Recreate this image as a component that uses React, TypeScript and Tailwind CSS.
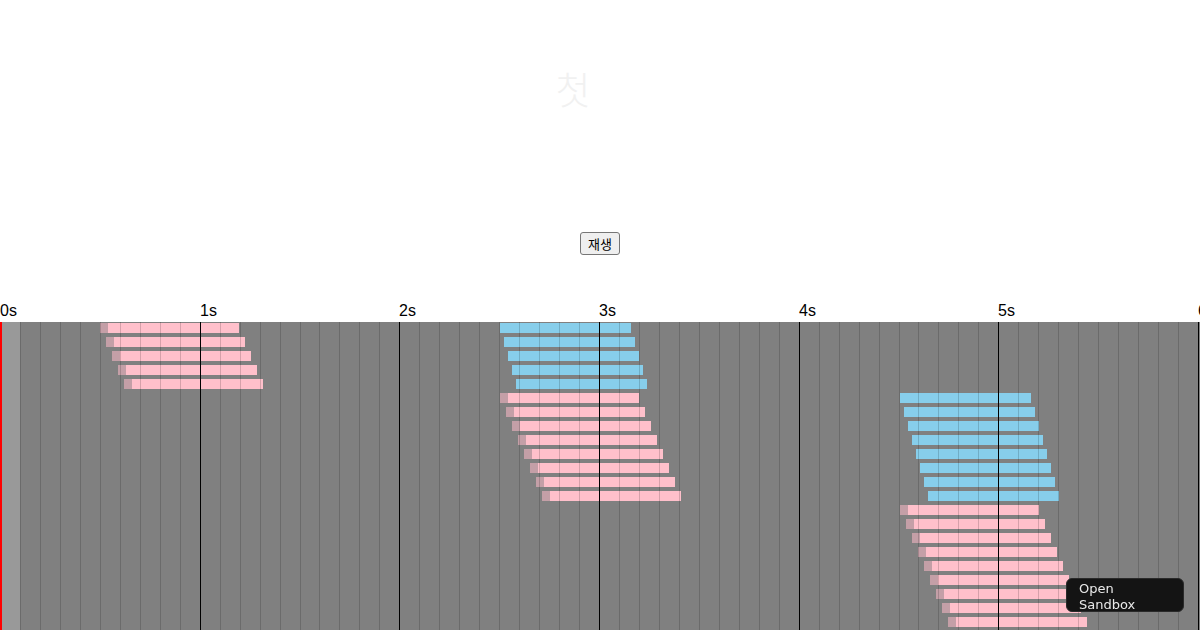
import React from 'react';

// timeline scale: 6 seconds across 1198px
const TIMELINE_W = 1198;
const SECONDS = 6;
const ROW_TOP = 1;
const ROW_PITCH = 14;

type Bar = { row: number; left: number; lead: number; width: number; color: 'pink' | 'blue' };

const buildBars = (): Bar[] => {
  const bars: Bar[] = [];
  // first group, ~0.5s
  for (let i = 0; i < 5; i++) bars.push({ row: i, left: 100 + i * 6, lead: 8, width: 131, color: 'pink' });
  // second group, ~2.5s
  for (let i = 0; i < 5; i++) bars.push({ row: i, left: 500 + i * 4, lead: 0, width: 131, color: 'blue' });
  for (let i = 0; i < 8; i++) bars.push({ row: 5 + i, left: 500 + i * 6, lead: 8, width: 131, color: 'pink' });
  // third group, ~4.5s
  for (let i = 0; i < 8; i++) bars.push({ row: 5 + i, left: 900 + i * 4, lead: 0, width: 131, color: 'blue' });
  for (let i = 0; i < 10; i++) bars.push({ row: 13 + i, left: 900 + i * 6, lead: 8, width: 131, color: 'pink' });
  return bars;
};

const bars = buildBars();
const ticks = Array.from({ length: SECONDS * 10 + 1 }, (_, k) => k);
const seconds = Array.from({ length: SECONDS + 1 }, (_, s) => s);

const Timeline: React.FC = () => {
  return (
    <div className="mt-[45px]">
      <div className="relative h-[22px] font-['Liberation_Sans',Arial,sans-serif] text-[16px] leading-[18px] text-black">
        {seconds.map(s => (
          <span key={s} className="absolute top-[2px]" style={{ left: Math.round((s / SECONDS) * TIMELINE_W) }}>
            {s}s
          </span>
        ))}
      </div>
      <div className="relative h-[420px] bg-[#808080] overflow-hidden">
        <div className="absolute left-0 top-0 bottom-0 w-[20px] bg-white/20" />
        {bars.map((b, i) => (
          <div
            key={i}
            className="absolute h-[10px] flex"
            style={{ left: b.left, top: ROW_TOP + b.row * ROW_PITCH }}
          >
            {b.lead > 0 && <div className="h-full bg-[#c49fa7]" style={{ width: b.lead }} />}
            <div className={`h-full ${b.color === 'pink' ? 'bg-[#ffc0cb]' : 'bg-[#87ceeb]'}`} style={{ width: b.width }} />
          </div>
        ))}
        {ticks.map(k => {
          const x = (k / (SECONDS * 10)) * TIMELINE_W;
          if (k === 0) return <div key={k} className="absolute top-0 bottom-0 left-0 w-[2px] bg-[#ff0000]" />;
          const major = k % 10 === 0;
          return (
            <div
              key={k}
              className={`absolute top-0 bottom-0 w-px ${major ? 'bg-black' : 'bg-black/[0.16]'}`}
              style={{ left: Math.round(x) }}
            />
          );
        })}
      </div>
    </div>
  );
}

export default function App() {
  return (
    <div className="h-screen w-full overflow-hidden bg-white">
      <div className="h-[232px] pt-[64px] flex justify-center">
        <span className="mr-[54px] text-[38px] leading-[48px] font-light text-[#f1f1f1] font-['Noto_Sans_CJK_KR','Noto_Sans',sans-serif]">
          첫
        </span>
      </div>
      <div className="flex justify-center">
        <button
          type="button"
          className="h-[23px] px-[7px] rounded-[3px] border border-[#767676] bg-[#efefef] text-[13px] leading-[20px] text-black font-['Noto_Sans_CJK_KR','Noto_Sans',sans-serif]"
        >
          재생
        </button>
      </div>
      <Timeline />
      <div className="fixed right-[16px] bottom-[18px] w-[118px] h-[34px] pt-[2px] pl-[12px] rounded-[6px] border border-[#2a2a2a] bg-[#141414] text-[#e8e8e8] text-[13px] leading-[16px] font-['DejaVu_Sans',sans-serif]">
        Open
        <br />
        Sandbox
      </div>
    </div>
  );
}
